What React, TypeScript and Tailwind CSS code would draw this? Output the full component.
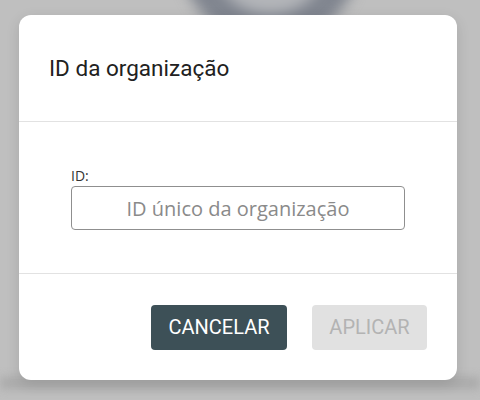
export default function App() {
  return (
    <div className="relative w-[480px] h-[400px] overflow-hidden bg-[#bfbfbf]">
      {/* blurred page behind the overlay */}
      <div className="absolute left-[180px] top-[-136px] w-[180px] h-[180px] rounded-full border-[30px] border-[#80858f] bg-[#b3b5b9] blur-[7px]" />
      <div className="absolute left-0 right-0 top-[377px] h-[12px] bg-[#a9a9a9] blur-[5px]" />

      <div className="absolute left-[19px] top-[15px] w-[438px] h-[365px] bg-white rounded-xl flex flex-col shadow-[0_4px_14px_rgba(0,0,0,0.12)]">
        <div className="h-[107px] px-[30px] flex items-center border-b border-[#e2e2e2]">
          <h2 className="text-[22.5px] leading-7 text-[#212121] font-['Roboto',sans-serif]">
            ID da organização
          </h2>
        </div>

        <div className="h-[152px] px-[52px] pt-[45px] border-b border-[#e2e2e2] font-['Open_Sans',sans-serif]">
          <label className="block text-[14px] leading-[19px] text-[#333333] mb-[1px] -mt-[1px]">ID:</label>
          <input
            className="w-full h-[44px] border border-[#8f8f8f] rounded-[4px] text-center text-[20px] text-[#333] placeholder:text-[#8a8a8a] outline-none"
            placeholder="ID único da organização"
          />
        </div>

        <div className="flex-1 flex items-center justify-end gap-[25px] pr-[30px] font-['Roboto',sans-serif]">
          <button className="h-[45px] w-[136px] rounded-[4px] bg-[#3d5057] text-white text-[20px] font-normal">
            CANCELAR
          </button>
          <button disabled className="h-[45px] w-[115px] rounded-[4px] bg-[#e1e1e1] text-[#b3b3b3] text-[20px] font-normal">
            APLICAR
          </button>
        </div>
      </div>
    </div>
  );
}
